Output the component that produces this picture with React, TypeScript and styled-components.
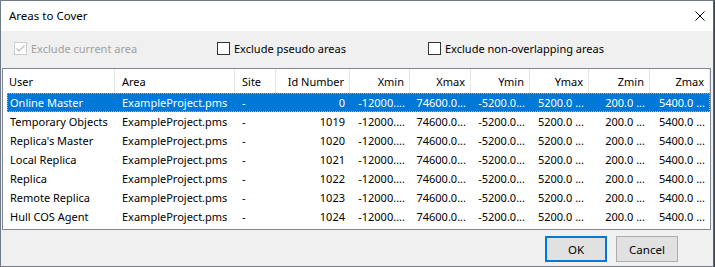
import React from "react";
import styled, { createGlobalStyle } from "styled-components";

const GlobalStyle = createGlobalStyle`
  html, body {
    margin: 0;
    padding: 0;
    background: #3a4450;
  }
  body {
    font-family: "Noto Sans", "Open Sans", sans-serif;
    font-size: 11px;
  }
`;

const UI_FONT = `"Noto Sans", "Open Sans", sans-serif`;

interface Column {
  title: string;
  width: number;
  align: "left" | "right";
}

const columns: Column[] = [
  { title: "User", width: 112, align: "left" },
  { title: "Area", width: 120, align: "left" },
  { title: "Site", width: 41, align: "left" },
  { title: "Id Number", width: 74, align: "right" },
  { title: "Xmin", width: 60, align: "right" },
  { title: "Xmax", width: 61, align: "right" },
  { title: "Ymin", width: 59, align: "right" },
  { title: "Ymax", width: 59, align: "right" },
  { title: "Zmin", width: 61, align: "right" },
  { title: "Zmax", width: 60, align: "right" },
];

const users = [
  ["Online Master", "0"],
  ["Temporary Objects", "1019"],
  ["Replica's Master", "1020"],
  ["Local Replica", "1021"],
  ["Replica", "1022"],
  ["Remote Replica", "1023"],
  ["Hull COS Agent", "1024"],
];

const rows = users.map(([user, id]) => [
  user,
  "ExampleProject.pms",
  "-",
  id,
  "-12000....",
  "74600.0...",
  "-5200.0...",
  "5200.0 ...",
  "200.0 ...",
  "5400.0 ...",
]);

const headerTemplate = columns.map((c) => `${c.width}px`).join(" ");
// the selection band starts 4px into the first column
const rowTemplate = columns
  .map((c, i) => `${i === 0 ? c.width - 4 : c.width}px`)
  .join(" ");

const Window = styled.div`
  width: 714px;
  height: 267px;
  box-sizing: border-box;
  border: 1px solid #6f7b89;
  border-right-color: #5c6673;
  display: flex;
  flex-direction: column;
  background: #f0f0f0;
  color: #000;
  font-family: ${UI_FONT};
  font-size: 11px;
`;

const TitleBar = styled.div`
  height: 30px;
  flex: none;
  background: #fff;
  display: flex;
  align-items: center;
  justify-content: space-between;
  padding: 0 8px 0 8px;
`;

const Title = styled.span`
  font-size: 11.5px;
  line-height: 16px;
`;

const CloseButton = styled.div`
  width: 10px;
  height: 10px;
  display: flex;
`;

const Body = styled.div`
  flex: 1;
  display: flex;
  flex-direction: column;
  padding: 0 2px 0 1px;
`;

const Options = styled.div`
  display: flex;
  align-items: center;
  height: 13px;
  padding: 11px 0 13px 12px;
`;

const Option = styled.label<{ $width?: number; $disabled?: boolean }>`
  display: flex;
  align-items: center;
  gap: 4px;
  width: ${(p) => (p.$width ? `${p.$width}px` : "auto")};
  color: ${(p) => (p.$disabled ? "#a0a0a0" : "#000")};
  white-space: nowrap;
`;

const Box = styled.span<{ $disabled?: boolean }>`
  width: 13px;
  height: 13px;
  box-sizing: border-box;
  border: 1px solid ${(p) => (p.$disabled ? "#cccccc" : "#333333")};
  background: #fff;
  display: flex;
  align-items: center;
  justify-content: center;
  flex: none;
`;

const List = styled.div`
  height: 162px;
  box-sizing: border-box;
  border: 1px solid #828790;
  background: #fff;
  overflow: hidden;
`;

const HeaderRow = styled.div`
  display: grid;
  grid-template-columns: ${headerTemplate};
  height: 24px;
`;

const HeaderCell = styled.div<{ $align: string; $first?: boolean }>`
  display: flex;
  align-items: center;
  justify-content: ${(p) => (p.$align === "right" ? "flex-end" : "flex-start")};
  padding: 0 5px 0 ${(p) => (p.$first ? 6 : p.$align === "right" ? 2 : 7)}px;
  border-right: 1px solid #e5e5e5;
  white-space: nowrap;
  overflow: hidden;
`;

const Row = styled.div<{ $selected?: boolean }>`
  display: grid;
  grid-template-columns: ${rowTemplate};
  height: 19px;
  margin-left: 4px;
  background: ${(p) => (p.$selected ? "#0078d7" : "transparent")};
  color: ${(p) => (p.$selected ? "#fff" : "#000")};
  outline: ${(p) => (p.$selected ? "1px dotted #ff9a3c" : "none")};
  outline-offset: -1px;
`;

const Cell = styled.div<{ $align: string; $first?: boolean }>`
  display: flex;
  align-items: center;
  justify-content: ${(p) => (p.$align === "right" ? "flex-end" : "flex-start")};
  padding: 0 5px 0 ${(p) => (p.$first ? 3 : p.$align === "right" ? 2 : 7)}px;
  white-space: nowrap;
  overflow: hidden;
`;

const Footer = styled.div`
  display: flex;
  gap: 9px;
  padding: 6px 0 4px 543px;
`;

const Button = styled.button<{ $default?: boolean }>`
  width: 62px;
  height: 26px;
  box-sizing: border-box;
  margin: 0;
  padding: 0;
  background: #e1e1e1;
  border: ${(p) => (p.$default ? "2px solid #0078d7" : "1px solid #adadad")};
  font-family: ${UI_FONT};
  font-size: 11.5px;
  color: #000;
`;

function Check({ checked, disabled }: { checked?: boolean; disabled?: boolean }) {
  return (
    <Box $disabled={disabled}>
      {checked && (
        <svg width="11" height="11" viewBox="0 0 11 11">
          <path d="M1.5 5.5 L4 8 L9.5 2.5" fill="none" stroke={disabled ? "#c0c0c0" : "#000"} strokeWidth="1.4" />
        </svg>
      )}
    </Box>
  );
}

export default function App() {
  return (
    <>
      <GlobalStyle />
      <Window>
        <TitleBar>
          <Title>Areas to Cover</Title>
          <CloseButton>
            <svg width="10" height="10" viewBox="0 0 10 10">
              <path d="M0.5 0.5 L9.5 9.5 M9.5 0.5 L0.5 9.5" stroke="#000" strokeWidth="1" fill="none" />
            </svg>
          </CloseButton>
        </TitleBar>
        <Body>
          <Options>
            <Option $width={203} $disabled>
              <Check checked disabled />
              Exclude current area
            </Option>
            <Option $width={211}>
              <Check />
              Exclude pseudo areas
            </Option>
            <Option>
              <Check />
              Exclude non-overlapping areas
            </Option>
          </Options>
          <List>
            <HeaderRow>
              {columns.map((c, i) => (
                <HeaderCell key={c.title} $align={c.align} $first={i === 0}>
                  {c.title}
                </HeaderCell>
              ))}
            </HeaderRow>
            {rows.map((r, ri) => (
              <Row key={ri} $selected={ri === 0}>
                {r.map((v, ci) => (
                  <Cell key={ci} $align={columns[ci].align} $first={ci === 0}>
                    {v}
                  </Cell>
                ))}
              </Row>
            ))}
          </List>
          <Footer>
            <Button $default>OK</Button>
            <Button>Cancel</Button>
          </Footer>
        </Body>
      </Window>
    </>
  );
}
